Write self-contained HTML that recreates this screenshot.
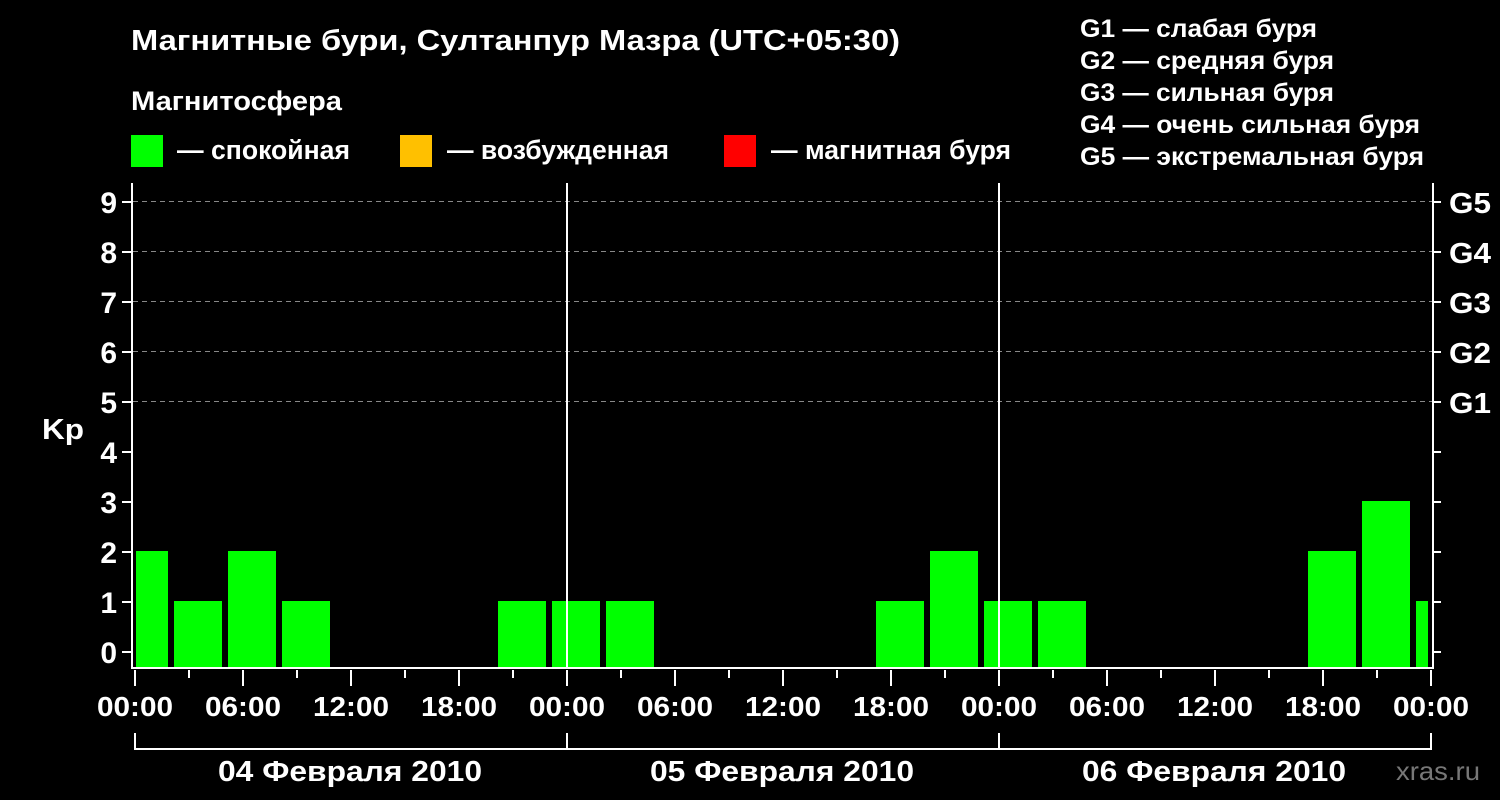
<!DOCTYPE html>
<html><head><meta charset="utf-8"><style>
html,body{margin:0;padding:0;background:#000;width:1500px;height:800px;overflow:hidden}
svg text{font-family:"Liberation Sans",Arial,sans-serif;font-weight:bold;fill:#fff}
</style></head><body>
<svg width="1500" height="800" viewBox="0 0 1500 800" xmlns="http://www.w3.org/2000/svg">
<rect width="1500" height="800" fill="#000"/>
<text x="131" y="50" font-size="29" textLength="769" lengthAdjust="spacingAndGlyphs">Магнитные бури, Султанпур Мазра (UTC+05:30)</text>
<text x="131" y="110" font-size="27" textLength="211" lengthAdjust="spacingAndGlyphs">Магнитосфера</text>
<rect x="131" y="135" width="32" height="32" fill="#00ff00"/>
<text x="177" y="159" font-size="27" textLength="173" lengthAdjust="spacingAndGlyphs">— спокойная</text>
<rect x="400" y="135" width="32" height="32" fill="#ffc000"/>
<text x="447" y="159" font-size="27" textLength="222" lengthAdjust="spacingAndGlyphs">— возбужденная</text>
<rect x="724" y="135" width="32" height="32" fill="#ff0000"/>
<text x="771" y="159" font-size="27" textLength="240" lengthAdjust="spacingAndGlyphs">— магнитная буря</text>
<g font-size="25">
<text x="1080" y="37" textLength="237" lengthAdjust="spacingAndGlyphs">G1 — слабая буря</text>
<text x="1080" y="69" textLength="254" lengthAdjust="spacingAndGlyphs">G2 — средняя буря</text>
<text x="1080" y="101" textLength="254" lengthAdjust="spacingAndGlyphs">G3 — сильная буря</text>
<text x="1080" y="133" textLength="340" lengthAdjust="spacingAndGlyphs">G4 — очень сильная буря</text>
<text x="1080" y="165" textLength="344" lengthAdjust="spacingAndGlyphs">G5 — экстремальная буря</text>
</g>
<g stroke="#888" stroke-width="1" stroke-dasharray="5,4">
<line x1="133" y1="201.5" x2="1432" y2="201.5"/>
<line x1="133" y1="251.5" x2="1432" y2="251.5"/>
<line x1="133" y1="301.5" x2="1432" y2="301.5"/>
<line x1="133" y1="351.5" x2="1432" y2="351.5"/>
<line x1="133" y1="401.5" x2="1432" y2="401.5"/>
</g>
<g fill="#00ff00">
<rect x="136" y="551" width="32" height="117"/>
<rect x="174" y="601" width="48" height="67"/>
<rect x="228" y="551" width="48" height="117"/>
<rect x="282" y="601" width="48" height="67"/>
<rect x="498" y="601" width="48" height="67"/>
<rect x="552" y="601" width="48" height="67"/>
<rect x="606" y="601" width="48" height="67"/>
<rect x="876" y="601" width="48" height="67"/>
<rect x="930" y="551" width="48" height="117"/>
<rect x="984" y="601" width="48" height="67"/>
<rect x="1038" y="601" width="48" height="67"/>
<rect x="1308" y="551" width="48" height="117"/>
<rect x="1362" y="501" width="48" height="167"/>
<rect x="1416" y="601" width="12" height="67"/>
</g>
<g stroke="#fff" stroke-width="2" fill="none">
<polyline points="132,183 132,668 1433,668 1433,183"/>
<line x1="567" y1="183" x2="567" y2="668"/>
<line x1="999" y1="183" x2="999" y2="668"/>
<path d="M122 652H132M122 602H132M122 552H132M122 502H132M122 452H132M122 402H132M122 352H132M122 302H132M122 252H132M122 202H132"/>
<path d="M1433 652H1441M1433 602H1441M1433 552H1441M1433 502H1441M1433 452H1441M1433 402H1441M1433 352H1441M1433 302H1441M1433 252H1441M1433 202H1441"/>
<path d="M135 670V686M189 670V678M243 670V686M297 670V678M351 670V686M405 670V678M459 670V686M513 670V678M567 670V686M621 670V678M675 670V686M729 670V678M783 670V686M837 670V678M891 670V686M945 670V678M999 670V686M1053 670V678M1107 670V686M1161 670V678M1215 670V686M1269 670V678M1323 670V686M1377 670V678M1431 670V686"/>
<path d="M135 733V749H1431V733M567 733V749M999 733V749"/>
</g>
<g font-size="30" text-anchor="end">
<text x="117" y="663">0</text><text x="117" y="613">1</text><text x="117" y="563">2</text>
<text x="117" y="513">3</text><text x="117" y="463">4</text><text x="117" y="413">5</text>
<text x="117" y="363">6</text><text x="117" y="313">7</text><text x="117" y="263">8</text>
<text x="117" y="213">9</text>
</g>
<text x="42" y="439" font-size="29" textLength="42" lengthAdjust="spacingAndGlyphs">Kp</text>
<g font-size="29">
<text x="1449" y="213" textLength="42" lengthAdjust="spacingAndGlyphs">G5</text><text x="1449" y="263" textLength="42" lengthAdjust="spacingAndGlyphs">G4</text><text x="1449" y="313" textLength="42" lengthAdjust="spacingAndGlyphs">G3</text>
<text x="1449" y="363" textLength="42" lengthAdjust="spacingAndGlyphs">G2</text><text x="1449" y="413" textLength="42" lengthAdjust="spacingAndGlyphs">G1</text>
</g>
<g font-size="28">
<text x="97" y="716" textLength="76" lengthAdjust="spacingAndGlyphs">00:00</text><text x="205" y="716" textLength="76" lengthAdjust="spacingAndGlyphs">06:00</text><text x="313" y="716" textLength="76" lengthAdjust="spacingAndGlyphs">12:00</text><text x="421" y="716" textLength="76" lengthAdjust="spacingAndGlyphs">18:00</text>
<text x="529" y="716" textLength="76" lengthAdjust="spacingAndGlyphs">00:00</text><text x="637" y="716" textLength="76" lengthAdjust="spacingAndGlyphs">06:00</text><text x="745" y="716" textLength="76" lengthAdjust="spacingAndGlyphs">12:00</text><text x="853" y="716" textLength="76" lengthAdjust="spacingAndGlyphs">18:00</text>
<text x="961" y="716" textLength="76" lengthAdjust="spacingAndGlyphs">00:00</text><text x="1069" y="716" textLength="76" lengthAdjust="spacingAndGlyphs">06:00</text><text x="1177" y="716" textLength="76" lengthAdjust="spacingAndGlyphs">12:00</text><text x="1285" y="716" textLength="76" lengthAdjust="spacingAndGlyphs">18:00</text>
<text x="1393" y="716" textLength="76" lengthAdjust="spacingAndGlyphs">00:00</text>
</g>
<g font-size="29">
<text x="218" y="781" textLength="264" lengthAdjust="spacingAndGlyphs">04 Февраля 2010</text>
<text x="650" y="781" textLength="264" lengthAdjust="spacingAndGlyphs">05 Февраля 2010</text>
<text x="1082" y="781" textLength="264" lengthAdjust="spacingAndGlyphs">06 Февраля 2010</text>
</g>
<text x="1396" y="780" font-size="26" textLength="84" lengthAdjust="spacingAndGlyphs" style="fill:#777;font-weight:normal">xras.ru</text>
</svg>
</body></html>
